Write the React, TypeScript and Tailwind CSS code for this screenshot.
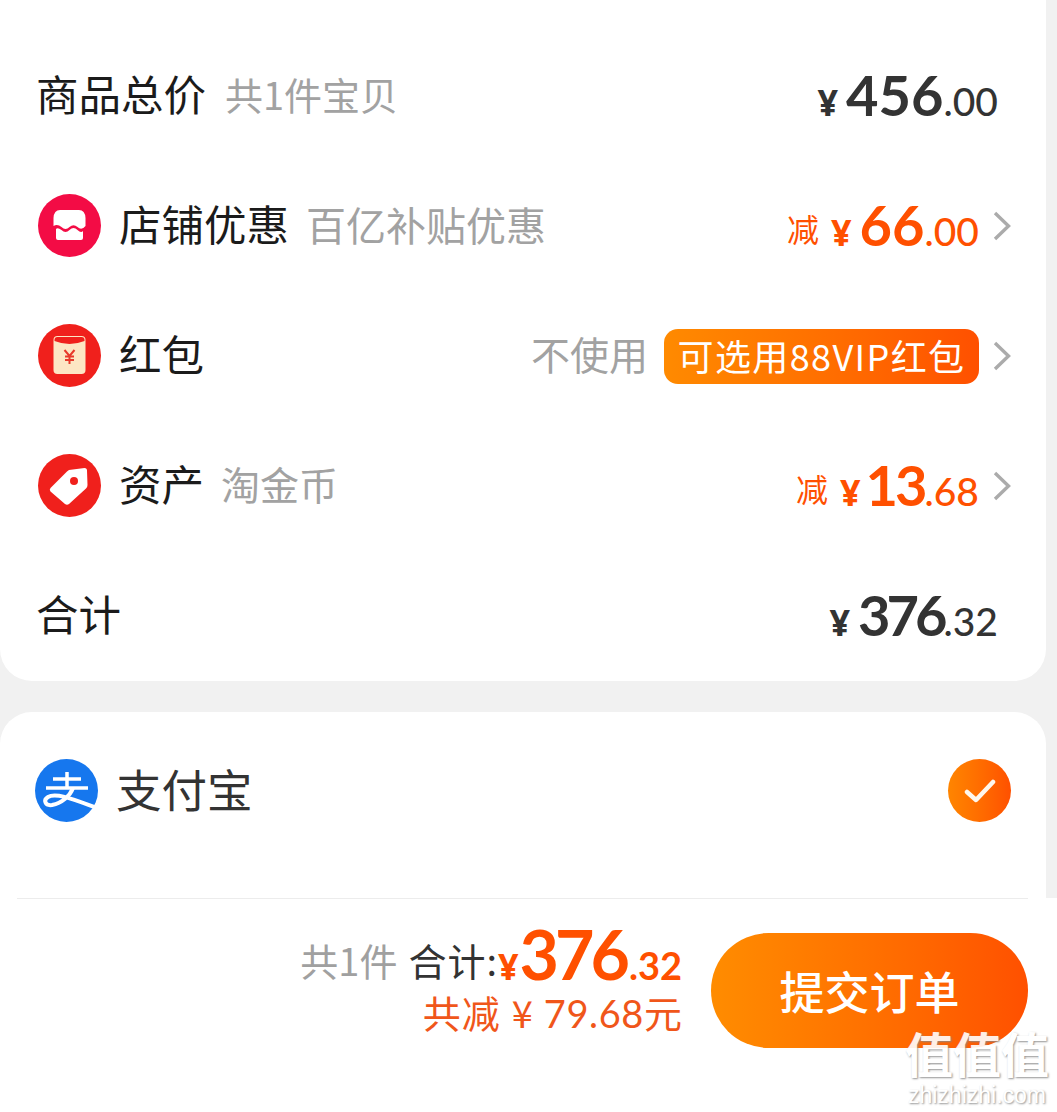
const cjk = "font-['Noto_Sans_CJK_SC','Noto_Sans',sans-serif]"

const Chevron = () => (
  <svg width="18" height="30" viewBox="0 0 18 30" fill="none" className="shrink-0">
    <path d="M2 2 L15.500 15 L2 28" stroke="#ababab" strokeWidth="3.400" />
  </svg>
)

const StoreIcon = () => (
  <svg width="63" height="63" viewBox="0 0 63 63" className="shrink-0 mb-[2px]">
    <circle cx="31.5" cy="31.5" r="31.5" fill="#f30c45" />
    <path
      d="M22 16 H41 Q47 16 47.500 24 V32 Q43.500 37 39.500 33 Q35.500 29.500 31.500 33 Q27.500 37 23.500 33 Q19.500 29.500 15.500 32 V24 Q16 16 22 16 Z"
      fill="#fff"
    />
    <path
      d="M18 35 Q19.500 33 23.500 36 Q27.500 40 31.500 36 Q35.500 32 39.500 36 Q43 39.500 45 37 V44 Q45 46 43 46 H20 Q18 46 18 44 Z"
      fill="#fff"
    />
  </svg>
)

const RedPacketIcon = () => (
  <svg width="63" height="63" viewBox="0 0 63 63" className="shrink-0 mb-[2px]">
    <circle cx="31.5" cy="31.5" r="31.5" fill="#f0201c" />
    <rect x="15.500" y="12" width="32" height="38" rx="4" fill="#fde6c4" />
    <path d="M16.500 16 Q16.500 13 19.500 13 H43.500 Q46.500 13 46.500 16 V17 Q31.500 23 16.500 17 Z" fill="#f0201c" />
    <path d="M26.500 26 L31.500 32 L36.500 26 M31.500 32 V40 M27 32.500 H36 M27 36 H36" stroke="#e8392b" strokeWidth="2" fill="none" />
  </svg>
)

const TagIcon = () => (
  <svg width="63" height="63" viewBox="0 0 63 63" className="shrink-0 mb-[2px]">
    <circle cx="31.5" cy="31.5" r="31.5" fill="#f0201c" />
    <path
      d="M31 16 L46.500 14 Q49 14 49 16.500 L49.500 31 Q49.500 33 48 34.500 L31 50 Q29 51.500 27 50 L12.500 37.500 Q11 35.500 12.500 34 L29 17.500 Q30 16.500 31 16 Z"
      fill="#fff"
    />
    <circle cx="36" cy="27" r="4" fill="#f0201c" />
  </svg>
)

const AlipayIcon = () => (
  <svg width="63" height="63" viewBox="0 0 63 63" className="shrink-0">
    <circle cx="31.5" cy="31.5" r="31.5" fill="#1677ee" />
    <g fill="none" stroke="#fff" strokeWidth="3.500">
      <path d="M32 13 V29" />
      <path d="M18 20 H46" />
      <path d="M11 29 H53" />
      <path d="M38 29 C35 37 27 44 17 46 C10 47 8 41 13 38 C21 33 40 41 62 49" strokeWidth="4" />
    </g>
  </svg>
)

const CheckIcon = () => (
  <div className="w-[63px] h-[63px] rounded-full bg-gradient-to-r from-[#ff8500] to-[#ff5000] flex items-center justify-center shrink-0">
    <svg width="32" height="26" viewBox="0 0 32 26" fill="none">
      <path d="M3 14 L12 22 L29 4" stroke="#fff7ec" strokeWidth="4.500" strokeLinecap="round" strokeLinejoin="round" />
    </svg>
  </div>
)

type PriceProps = {
  whole: string
  cents: string
  tone: string
  wholeClass?: string
}

const Price = ({ whole, cents, tone, wholeClass = "" }: PriceProps) => (
  <span className={`flex items-baseline pt-[4px] font-['Lato',sans-serif] ${tone}`}>
    <span className="text-[36px] font-bold mr-[8px] font-['Noto_Sans','Noto_Sans_CJK_SC',sans-serif]">¥</span>
    <span className={`text-[56px] font-bold leading-none ${wholeClass}`}>{whole}</span>
    <span className="text-[39px] font-medium leading-none">.{cents}</span>
  </span>
)

const Label = ({ children }: { children: React.ReactNode }) => (
  <span className="text-[42.500px] leading-none text-[#1b1b1b] pb-[5px] -ml-[2px]">{children}</span>
)

const Hint = ({ size = "text-[39px]", children }: { size?: string; children: React.ReactNode }) => (
  <span className={`${size} leading-none text-[#a2a2a2] pb-[5px]`}>{children}</span>
)

const Minus = () => (
  <span className="text-[32px] leading-none text-[#ff5000] -translate-y-[4px] mr-[12px]">减</span>
)

export default function App() {
  return (
    <div className={`w-[1057px] h-[1112px] overflow-hidden relative bg-[#f1f1f1] ${cjk}`}>
      <div className="w-[1046px] bg-white rounded-b-[32px] pt-[31px]">
        <div className="h-[130px] flex items-center justify-between pl-[38px] pr-[48px]">
          <div className="flex items-center gap-[19px]">
            <Label>商品总价</Label>
            <Hint size="text-[38px]">共1件宝贝</Hint>
          </div>
          <Price whole="456" cents="00" tone="text-[#333333]" />
        </div>

        <div className="h-[130px] flex items-center justify-between pl-[38px] pr-[35px]">
          <div className="flex items-center">
            <StoreIcon />
            <div className="ml-[20px] flex items-center gap-[17px]">
              <Label>店铺优惠</Label>
              <Hint size="text-[40px]">百亿补贴优惠</Hint>
            </div>
          </div>
          <div className="flex items-center gap-[14px]">
            <div className="flex items-baseline">
              <Minus />
              <Price whole="66" cents="00" tone="text-[#ff5000]" />
            </div>
            <Chevron />
          </div>
        </div>

        <div className="h-[130px] flex items-center justify-between pl-[38px] pr-[35px]">
          <div className="flex items-center">
            <RedPacketIcon />
            <span className="ml-[20px] flex">
              <Label>红包</Label>
            </span>
          </div>
          <div className="flex items-center gap-[14px]">
            <Hint>不使用</Hint>
            <div className="ml-[2px] h-[55px] w-[315px] rounded-[14px] bg-gradient-to-r from-[#ff8a00] to-[#ff5000] flex items-center justify-center text-white text-[36px] tracking-[1.400px] pb-[2px] leading-none whitespace-nowrap">
              可选用88VIP红包
            </div>
            <Chevron />
          </div>
        </div>

        <div className="h-[130px] flex items-center justify-between pl-[38px] pr-[35px]">
          <div className="flex items-center">
            <TagIcon />
            <div className="ml-[20px] flex items-center gap-[17px]">
              <Label>资产</Label>
              <Hint>淘金币</Hint>
            </div>
          </div>
          <div className="flex items-center gap-[14px]">
            <div className="flex items-baseline">
              <Minus />
              <Price whole="13" cents="68" tone="text-[#ff5000]" wholeClass="tracking-[-3px] -ml-[3px]" />
            </div>
            <Chevron />
          </div>
        </div>

        <div className="h-[130px] flex items-center justify-between pl-[38px] pr-[48px]">
          <Label>合计</Label>
          <Price whole="376" cents="32" tone="text-[#333333]" wholeClass="tracking-[-4px]" />
        </div>
      </div>

      <div className="w-[1046px] h-[186px] mt-[31px] bg-white rounded-t-[32px] pt-[47px] pl-[35px] pr-[35px]">
        <div className="flex items-center justify-between">
          <div className="flex items-center gap-[18px]">
            <AlipayIcon />
            <span className="text-[45.500px] leading-none text-[#333333] pb-[4px]">支付宝</span>
          </div>
          <CheckIcon />
        </div>
      </div>

      <div className="h-[214px] bg-white pl-[17px] pr-[29px]">
        <div className="h-px bg-[#ececec]" />
        <div className="relative flex justify-end items-start gap-[29px] pt-[21px]">
          <div className="flex flex-col items-end">
            <div className="flex items-baseline h-[73px] whitespace-nowrap">
              <span className="text-[38px] leading-none text-[#a0a0a0] mr-[11px] -translate-y-[4px]">共1件</span>
              <span className="text-[38px] leading-none text-[#333333] tracking-[1px] -translate-y-[4px]">合计:</span>
              <span className="text-[36px] leading-none font-bold text-[#ff5000] font-['Noto_Sans','Noto_Sans_CJK_SC',sans-serif]">¥</span>
              <span className="text-[68px] leading-none font-bold tracking-[-4px] text-[#ff5000] font-['Lato',sans-serif] ml-[1px]">376</span>
              <span className="text-[38px] leading-none font-bold text-[#ff5000] font-['Lato',sans-serif] ml-[3px]">.32</span>
            </div>
            <div className="text-[38px] leading-none text-[#f0561a] whitespace-nowrap flex items-baseline">
              <span className="tracking-[1px]">共减</span>
              <span className="ml-[11px] mr-[11px]">¥</span>
              <span className="font-['Lato',sans-serif] tracking-[0.600px]">79.68</span>
              <span>元</span>
            </div>
          </div>
          <button className="mt-[13px] w-[317px] h-[115px] rounded-full bg-gradient-to-r from-[#ff8c00] to-[#ff5000] text-white text-[45px] font-medium leading-none">
            提交订单
          </button>
        </div>
      </div>

      {/* zhizhizhi watermark */}
      <div className="absolute left-[905px] top-[1022px] w-[144px] flex flex-col items-center text-white [text-shadow:1px_1px_2px_#8a8a8a] opacity-90">
        <span className="text-[48px] leading-[60px] font-bold whitespace-nowrap">值值值</span>
        <span className="text-[23px] leading-[26px] font-['Liberation_Sans',sans-serif]">zhizhizhi.com</span>
      </div>
    </div>
  )
}
